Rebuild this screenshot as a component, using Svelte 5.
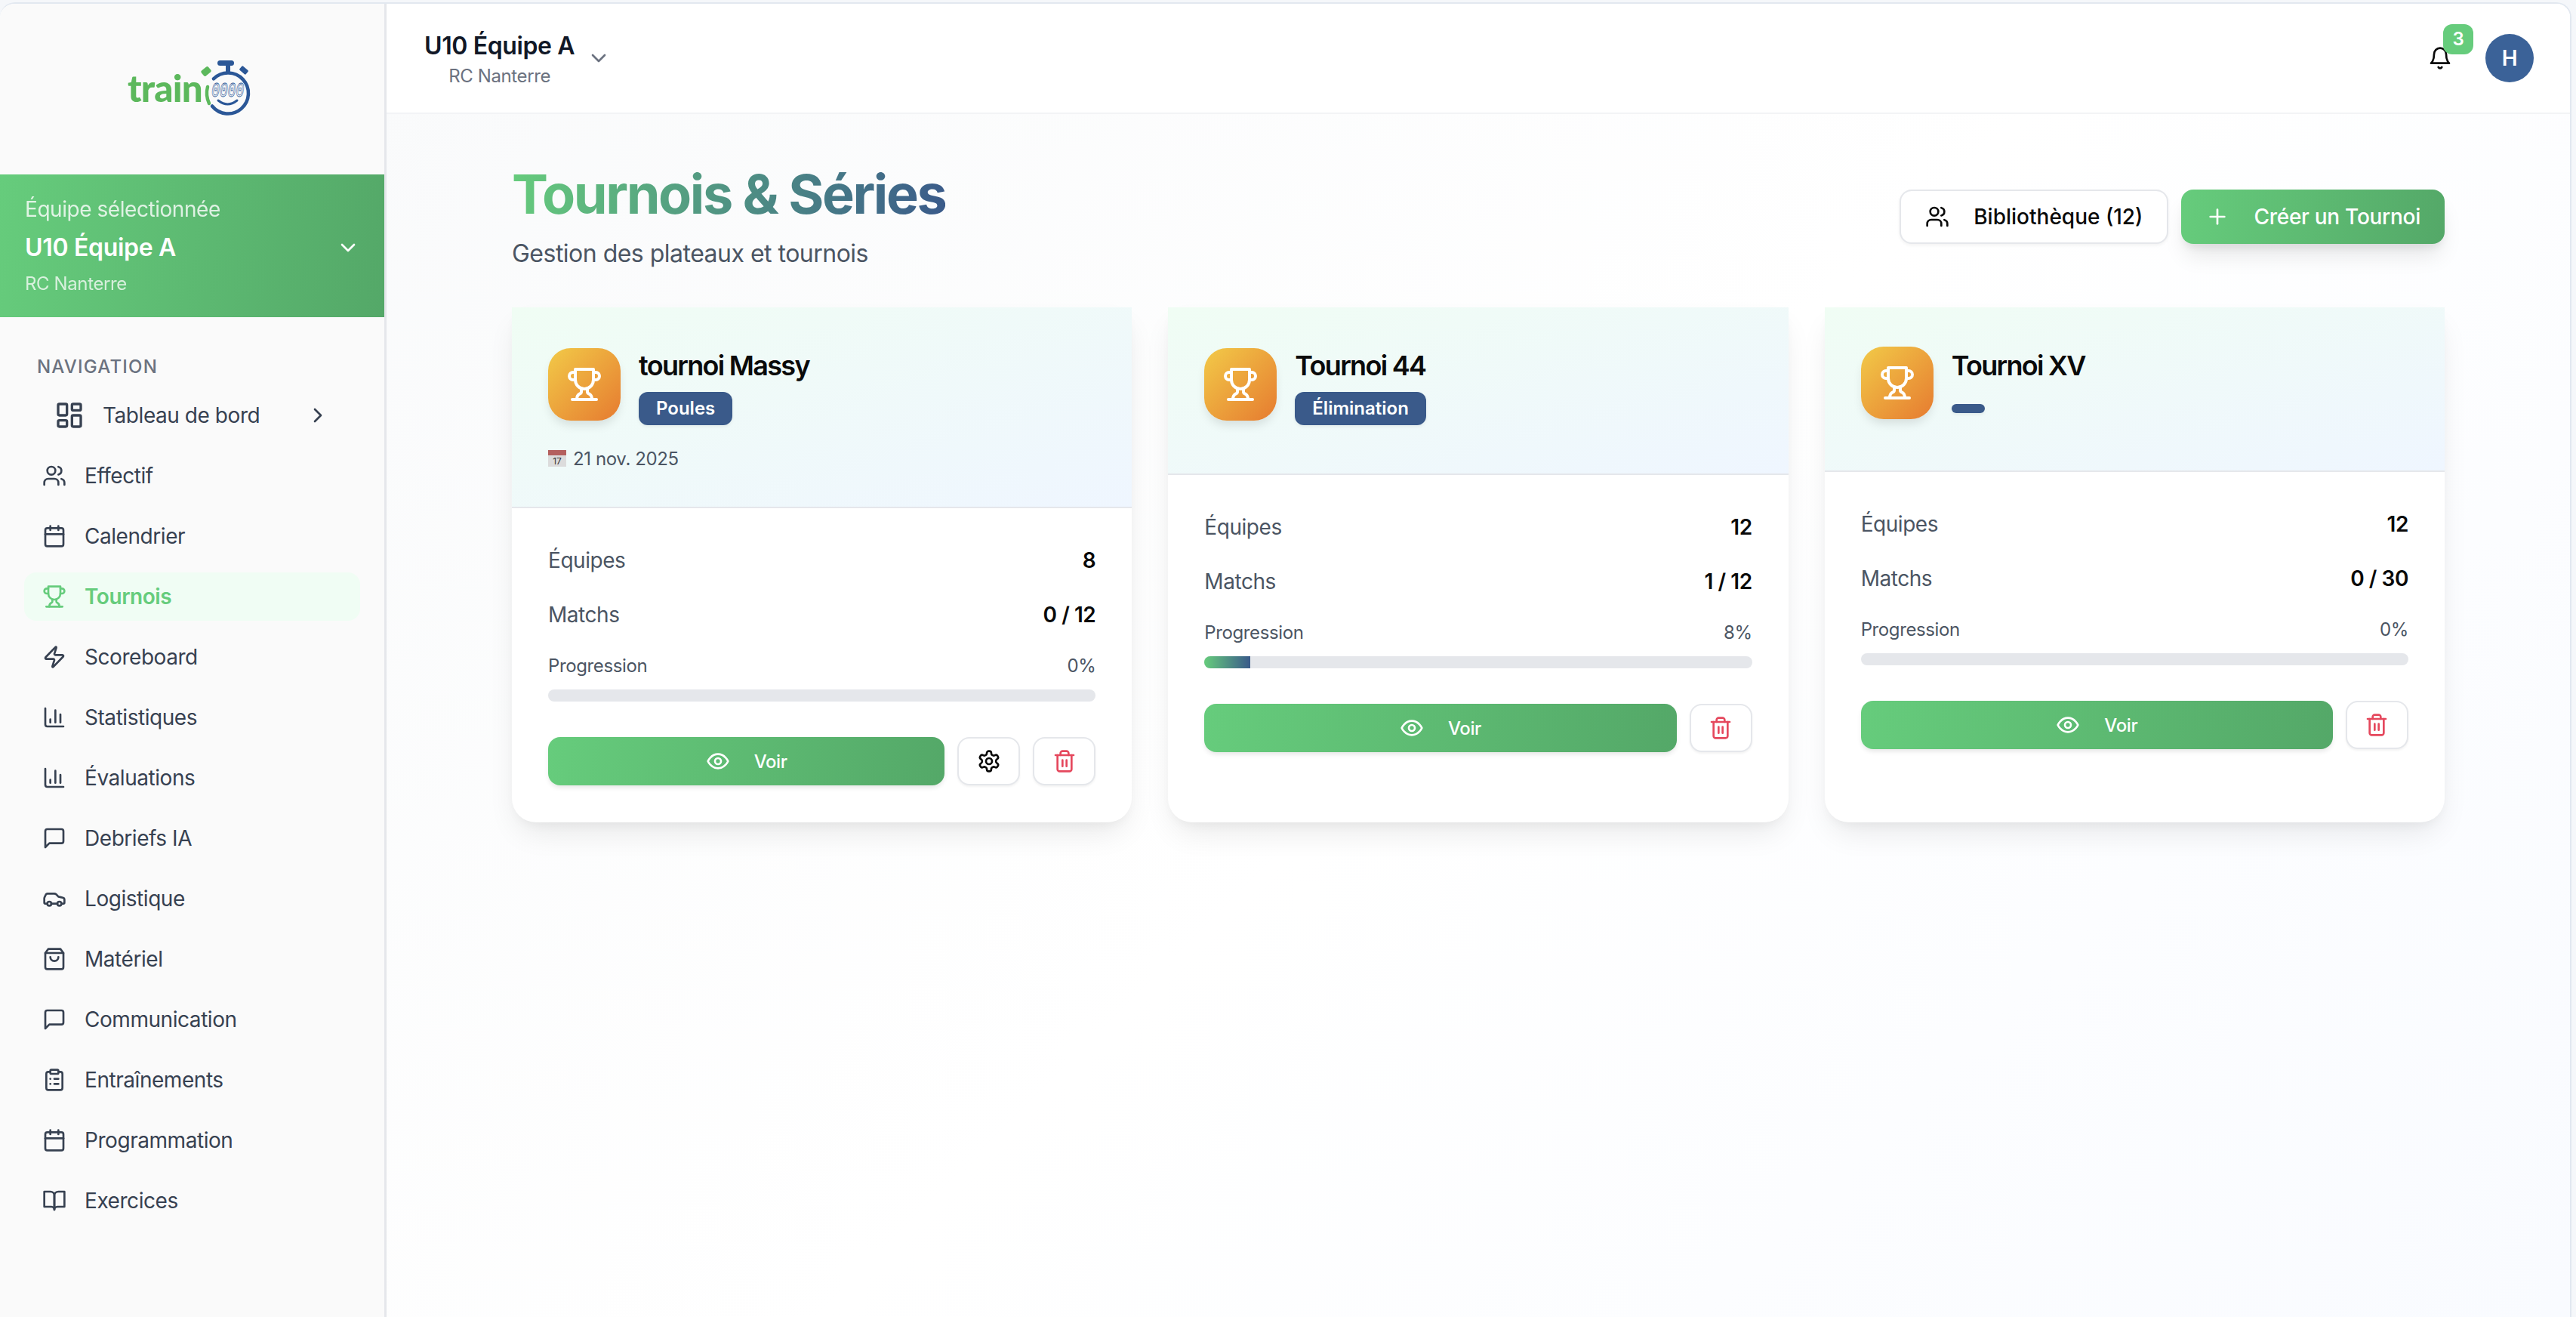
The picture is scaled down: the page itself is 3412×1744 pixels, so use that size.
<script lang="ts">
  // lucide shapes, drawn through a single snippet below
  const icons: Record<string, string> = {
    dashboard: '<rect width="7" height="9" x="3" y="3" rx="1"/><rect width="7" height="5" x="14" y="3" rx="1"/><rect width="7" height="9" x="14" y="12" rx="1"/><rect width="7" height="5" x="3" y="16" rx="1"/>',
    users: '<path d="M16 21v-2a4 4 0 0 0-4-4H6a4 4 0 0 0-4 4v2"/><circle cx="9" cy="7" r="4"/><path d="M22 21v-2a4 4 0 0 0-3-3.87"/><path d="M16 3.13a4 4 0 0 1 0 7.75"/>',
    calendar: '<path d="M8 2v4"/><path d="M16 2v4"/><rect width="18" height="18" x="3" y="4" rx="2"/><path d="M3 10h18"/>',
    trophy: '<path d="M6 9H4.5a2.5 2.5 0 0 1 0-5H6"/><path d="M18 9h1.5a2.5 2.5 0 0 0 0-5H18"/><path d="M4 22h16"/><path d="M10 14.66V17c0 .55-.47.98-.97 1.21C7.85 18.75 7 20.24 7 22"/><path d="M14 14.66V17c0 .55.47.98.97 1.21C16.15 18.75 17 20.24 17 22"/><path d="M18 2H6v7a6 6 0 0 0 12 0V2Z"/>',
    zap: '<path d="M4 14a1 1 0 0 1-.78-1.63l9.9-10.2a.5.5 0 0 1 .86.46l-1.92 6.02A1 1 0 0 0 13 10h7a1 1 0 0 1 .78 1.63l-9.9 10.2a.5.5 0 0 1-.86-.46l1.92-6.02A1 1 0 0 0 11 14z"/>',
    chart: '<path d="M3 3v16a2 2 0 0 0 2 2h16"/><path d="M18 17V9"/><path d="M13 17V5"/><path d="M8 17v-3"/>',
    message: '<path d="M21 15a2 2 0 0 1-2 2H7l-4 4V5a2 2 0 0 1 2-2h14a2 2 0 0 1 2 2z"/>',
    car: '<path d="M19 17h2c.6 0 1-.4 1-1v-3c0-.9-.7-1.7-1.5-1.9C18.7 10.6 16 10 16 10s-1.3-1.4-2.2-2.3c-.5-.4-1.1-.7-1.8-.7H5c-.6 0-1.1.4-1.4.9l-1.4 2.9A3.7 3.7 0 0 0 2 12v4c0 .6.4 1 1 1h2"/><circle cx="7" cy="17" r="2"/><path d="M9 17h6"/><circle cx="17" cy="17" r="2"/>',
    bag: '<path d="M6 2 3 6v14a2 2 0 0 0 2 2h14a2 2 0 0 0 2-2V6l-3-4Z"/><path d="M3 6h18"/><path d="M16 10a4 4 0 0 1-8 0"/>',
    clipboard: '<rect width="8" height="4" x="8" y="2" rx="1" ry="1"/><path d="M16 4h2a2 2 0 0 1 2 2v14a2 2 0 0 1-2 2H6a2 2 0 0 1-2-2V6a2 2 0 0 1 2-2h2"/><path d="M12 11h4"/><path d="M12 16h4"/><path d="M8 11h.01"/><path d="M8 16h.01"/>',
    book: '<path d="M2 3h6a4 4 0 0 1 4 4v14a3 3 0 0 0-3-3H2z"/><path d="M22 3h-6a4 4 0 0 0-4 4v14a3 3 0 0 1 3-3h7z"/>',
    eye: '<path d="M2 12s3-7 10-7 10 7 10 7-3 7-10 7-10-7-10-7Z"/><circle cx="12" cy="12" r="3"/>',
    settings: '<path d="M12.22 2h-.44a2 2 0 0 0-2 2v.18a2 2 0 0 1-1 1.73l-.43.25a2 2 0 0 1-2 0l-.15-.08a2 2 0 0 0-2.73.73l-.22.38a2 2 0 0 0 .73 2.73l.15.1a2 2 0 0 1 1 1.72v.51a2 2 0 0 1-1 1.74l-.15.09a2 2 0 0 0-.73 2.73l.22.38a2 2 0 0 0 2.73.73l.15-.08a2 2 0 0 1 2 0l.43.25a2 2 0 0 1 1 1.73V20a2 2 0 0 0 2 2h.44a2 2 0 0 0 2-2v-.18a2 2 0 0 1 1-1.73l.43-.25a2 2 0 0 1 2 0l.15.08a2 2 0 0 0 2.73-.73l.22-.39a2 2 0 0 0-.73-2.73l-.15-.08a2 2 0 0 1-1-1.74v-.5a2 2 0 0 1 1-1.74l.15-.09a2 2 0 0 0 .73-2.73l-.22-.38a2 2 0 0 0-2.73-.73l-.15.08a2 2 0 0 1-2 0l-.43-.25a2 2 0 0 1-1-1.73V4a2 2 0 0 0-2-2z"/><circle cx="12" cy="12" r="3"/>',
    trash: '<path d="M3 6h18"/><path d="M19 6v14c0 1-1 2-2 2H7c-1 0-2-1-2-2V6"/><path d="M8 6V4c0-1 1-2 2-2h4c1 0 2 1 2 2v2"/><line x1="10" x2="10" y1="11" y2="17"/><line x1="14" x2="14" y1="11" y2="17"/>',
    bell: '<path d="M6 8a6 6 0 0 1 12 0c0 7 3 9 3 9H3s3-2 3-9"/><path d="M10.3 21a1.94 1.94 0 0 0 3.4 0"/>',
    plus: '<path d="M5 12h14"/><path d="M12 5v14"/>',
    down: '<path d="m6 9 6 6 6-6"/>',
    right: '<path d="m9 18 6-6-6-6"/>'
  };

  const navItems = [
    { label: "Effectif", icon: "users" },
    { label: "Calendrier", icon: "calendar" },
    { label: "Tournois", icon: "trophy", active: true },
    { label: "Scoreboard", icon: "zap" },
    { label: "Statistiques", icon: "chart" },
    { label: "Évaluations", icon: "chart" },
    { label: "Debriefs IA", icon: "message" },
    { label: "Logistique", icon: "car" },
    { label: "Matériel", icon: "bag" },
    { label: "Communication", icon: "message" },
    { label: "Entraînements", icon: "clipboard" },
    { label: "Programmation", icon: "calendar" },
    { label: "Exercices", icon: "book" }
  ];

  const tournaments = [
    { name: "tournoi Massy", type: "Poules", date: "21 nov. 2025", teams: "8", matches: "0 / 12", pct: 0, label: "0%", settings: true },
    { name: "Tournoi 44", type: "Élimination", date: "", teams: "12", matches: "1 / 12", pct: 8.33, label: "8%", settings: false },
    { name: "Tournoi XV", type: "", date: "", teams: "12", matches: "0 / 30", pct: 0, label: "0%", settings: false }
  ];
</script>

{#snippet icon(name: string, size: number)}
  <svg class="icon" width={size} height={size} viewBox="0 0 24 24" fill="none" stroke="currentColor" stroke-width="2" stroke-linecap="round" stroke-linejoin="round">{@html icons[name]}</svg>
{/snippet}

<div class="window">
  <aside class="sidebar">
    <div class="logo">
      <svg width="190" height="80" viewBox="0 0 190 80">
        <text x="4" y="57" class="logo-word" textLength="99" lengthAdjust="spacingAndGlyphs">train</text>
        <path d="M110 37Q107 48 112 59" fill="none" stroke="#5cb85c" stroke-width="4.5" stroke-linecap="round" />
        <rect x="102" y="12" width="12" height="9" rx="2" fill="#5cb85c" transform="rotate(-40 108 16.5)" />
        <path d="M117.9 26.4A27 27 0 1 1 116 62.5" fill="none" stroke="#2b5797" stroke-width="4.5" stroke-linecap="round" />
        <rect x="123" y="2" width="22" height="7" rx="3.5" fill="#2b5797" />
        <rect x="134" y="8" width="6" height="11" fill="#2b5797" />
        <rect x="152.5" y="11.5" width="11" height="7" rx="1.5" fill="#2b5797" transform="rotate(40 158 15)" />
        <text x="115" y="50" class="logo-digits" textLength="43" lengthAdjust="spacingAndGlyphs">0000</text>
        <path d="M124 55Q136.5 65 149 55" fill="none" stroke="#2b5797" stroke-width="3" stroke-linecap="round" />
      </svg>
    </div>

    <div class="team">
      <div class="team-hint">Équipe sélectionnée</div>
      <div class="team-row">
        <span class="team-name">U10 Équipe A</span>
        {@render icon("down", 32)}
      </div>
      <div class="team-club">RC Nanterre</div>
    </div>

    <nav class="nav">
      <div class="nav-title">NAVIGATION</div>
      <div class="nav-item dash">
        {@render icon("dashboard", 40)}
        <span>Tableau de bord</span>
        <span class="nav-chevron">{@render icon("right", 32)}</span>
      </div>
      {#each navItems as item}
        <div class="nav-item" class:active={item.active}>
          {@render icon(item.icon, 32)}
          <span>{item.label}</span>
        </div>
      {/each}
    </nav>
  </aside>

  <div class="main">
    <header class="topbar">
      <div class="switcher">
        <div class="switcher-text">
          <div class="switcher-name">U10 Équipe A</div>
          <div class="switcher-club">RC Nanterre</div>
        </div>
        <span class="switcher-chevron">{@render icon("down", 32)}</span>
      </div>
      <div class="topbar-right">
        <div class="bell">
          {@render icon("bell", 32)}
          <span class="bell-badge">3</span>
        </div>
        <div class="avatar">H</div>
      </div>
    </header>

    <main class="content">
      <div class="page-head">
        <div>
          <h1>Tournois &amp; Séries</h1>
          <p>Gestion des plateaux et tournois</p>
        </div>
        <div class="page-actions">
          <button class="btn-outline">{@render icon("users", 32)}<span>Bibliothèque (12)</span></button>
          <button class="btn-primary">{@render icon("plus", 32)}<span>Créer un Tournoi</span></button>
        </div>
      </div>

      <div class="grid">
        {#each tournaments as t}
          <article class="card">
            <div class="card-head">
              <div class="card-row">
                <div class="card-icon">{@render icon("trophy", 48)}</div>
                <div class="card-info" class:untyped={!t.type}>
                  <h3>{t.name}</h3>
                  <span class="badge">{t.type}</span>
                </div>
              </div>
              {#if t.date}
                <div class="card-date">
                  <svg width="24" height="22" viewBox="0 0 24 22">
                    <rect width="24" height="22" fill="#dcdcdc" />
                    <rect width="24" height="7" fill="#b4605e" />
                    <text x="12" y="19" text-anchor="middle" class="date-num">17</text>
                  </svg>
                  <span>{t.date}</span>
                </div>
              {/if}
            </div>
            <div class="card-body">
              <div class="stat"><span>Équipes</span><strong>{t.teams}</strong></div>
              <div class="stat"><span>Matchs</span><strong>{t.matches}</strong></div>
              <div class="progress-label"><span>Progression</span><span>{t.label}</span></div>
              <div class="track"><div class="fill" style="width: {t.pct}%"></div></div>
              <div class="card-actions">
                <button class="btn-view">{@render icon("eye", 32)}<span>Voir</span></button>
                {#if t.settings}
                  <button class="btn-icon">{@render icon("settings", 32)}</button>
                {/if}
                <button class="btn-icon danger">{@render icon("trash", 32)}</button>
              </div>
            </div>
          </article>
        {/each}
      </div>
    </main>
  </div>
</div>

<style>
  :global(body) {
    margin: 0;
    background: #f5f7fa;
    font-family: Inter, "Noto Sans", sans-serif;
    overflow: hidden;
  }

  /* the reference's Inter runs a little tighter than the installed one */
  :global(*) {
    letter-spacing: -0.016em;
  }

  .window {
    display: flex;
    width: 3406px;
    height: 1741px;
    margin-top: 3px;
    box-sizing: border-box;
    border-top: 2px solid #e2e8f0;
    border-right: 2px solid #e2e8f0;
    border-radius: 20px 20px 0 0;
    overflow: hidden;
    background: #fff;
  }

  .icon {
    display: block;
    flex: none;
  }

  /* sidebar */
  .sidebar {
    width: 512px;
    flex: none;
    box-sizing: border-box;
    border-right: 3px solid #e5e7eb;
    background: #fafafa;
  }

  .logo {
    height: 226px;
    box-sizing: border-box;
    padding: 0 0 0 10px;
    display: flex;
    align-items: center;
    justify-content: center;
  }

  .logo-word {
    font-family: Lato, sans-serif;
    font-weight: 900;
    font-size: 50px;
    fill: #5cb85c;
  }

  .logo-digits {
    font-family: "Liberation Mono", monospace;
    font-style: italic;
    font-size: 28px;
    fill: none;
    stroke: #2b5797;
    stroke-width: 0.8;
  }

  .team {
    height: 189px;
    box-sizing: border-box;
    padding: 26px 32px 0 33px;
    background: linear-gradient(97deg, #66cc7c, #54a868);
    color: #fff;
  }

  .team-hint {
    font-size: 28px;
    line-height: 40px;
    opacity: 0.8;
  }

  .team-row {
    display: flex;
    align-items: center;
    justify-content: space-between;
    height: 48px;
    margin-top: 7px;
  }

  .team-name {
    font-size: 32px;
    font-weight: 600;
    line-height: 48px;
    letter-spacing: -0.01em;
  }

  .team-club {
    font-size: 24px;
    line-height: 32px;
    margin-top: 8px;
    opacity: 0.75;
  }

  .nav {
    padding: 0 32px;
  }

  .nav-title {
    height: 98px;
    box-sizing: border-box;
    padding: 50px 0 0 17px;
    font-size: 24px;
    line-height: 32px;
    font-weight: 500;
    letter-spacing: 1.2px;
    color: #6b7280;
  }

  .nav-item {
    display: flex;
    align-items: center;
    gap: 24px;
    height: 64px;
    margin-bottom: 16px;
    padding: 0 24px;
    border-radius: 16px;
    font-size: 28px;
    color: #374151;
  }

  .nav-item.dash {
    padding: 0 40px;
  }

  .nav-chevron {
    margin-left: auto;
  }

  .nav-item.active {
    background: #f0fdf4;
    color: #66cc7c;
    font-weight: 600;
  }

  /* top bar */
  .main {
    flex: 1;
    min-width: 0;
    display: flex;
    flex-direction: column;
    background: linear-gradient(135deg, #f9fafb 0%, #ffffff 50%, #f9fbff 100%);
  }

  .topbar {
    flex: none;
    height: 146px;
    box-sizing: border-box;
    padding: 0 48px 0 50px;
    display: flex;
    align-items: center;
    justify-content: space-between;
    background: #fff;
    border-bottom: 2px solid #f3f4f6;
  }

  .switcher {
    display: flex;
    align-items: center;
    gap: 16px;
  }

  .switcher-text {
    text-align: center;
  }

  .switcher-name {
    font-size: 32px;
    font-weight: 600;
    line-height: 48px;
    letter-spacing: -0.012em;
    color: #111827;
  }

  .switcher-club {
    font-size: 24px;
    line-height: 32px;
    color: #6b7280;
  }

  .switcher-chevron {
    color: #6b7280;
  }

  .topbar-right {
    display: flex;
    align-items: center;
    gap: 44px;
  }

  .bell {
    position: relative;
    color: #0a0a0a;
  }

  .bell-badge {
    position: absolute;
    left: 20px;
    top: -29px;
    width: 40px;
    height: 40px;
    border-radius: 12px;
    background: #66cc7c;
    color: #fff;
    font-size: 24px;
    font-weight: 600;
    line-height: 40px;
    text-align: center;
  }

  .avatar {
    width: 64px;
    height: 64px;
    border-radius: 50%;
    background: #3b6298;
    color: #fff;
    font-size: 28px;
    font-weight: 600;
    line-height: 64px;
    text-align: center;
  }

  /* page */
  .content {
    width: 2560px;
    margin: 0 auto;
    padding-top: 66px;
  }

  .page-head {
    display: flex;
    align-items: center;
    justify-content: space-between;
    margin-bottom: 47px;
  }

  h1 {
    margin: 0;
    font-size: 72px;
    font-weight: 700;
    line-height: 80px;
    letter-spacing: -2.4px;
    background: linear-gradient(100deg, #66cc7c, #3a5a8a);
    -webkit-background-clip: text;
    background-clip: text;
    color: transparent;
    width: fit-content;
  }

  .page-head p {
    margin: 15px 0 0;
    font-size: 32px;
    line-height: 48px;
    color: #4b5563;
  }

  .page-actions {
    display: flex;
    gap: 17px;
    margin-bottom: 3px;
  }

  button {
    font-family: inherit;
    cursor: pointer;
  }

  .btn-outline,
  .btn-primary {
    display: flex;
    align-items: center;
    gap: 32px;
    height: 72px;
    box-sizing: border-box;
    padding: 0 32px;
    border-radius: 16px;
    font-size: 28px;
    font-weight: 500;
  }

  .btn-outline span {
    letter-spacing: 0;
  }

  .btn-primary span {
    letter-spacing: -0.01em;
  }

  .btn-outline {
    background: #fff;
    border: 2px solid #e5e7eb;
    color: #0a0a0a;
    box-shadow: 0 2px 4px rgba(0, 0, 0, 0.05);
  }

  .btn-primary {
    border: none;
    background: linear-gradient(97deg, #66cc7c, #54a868);
    color: #fff;
    box-shadow: 0 20px 30px -6px rgba(0, 0, 0, 0.1), 0 8px 12px -4px rgba(0, 0, 0, 0.08);
  }

  .grid {
    display: grid;
    grid-template-columns: repeat(3, 1fr);
    gap: 48px;
  }

  .card {
    display: flex;
    flex-direction: column;
    border-radius: 0 0 32px 32px;
    background: #fff;
    box-shadow: 0 20px 40px -8px rgba(0, 0, 0, 0.09), 0 8px 16px -6px rgba(0, 0, 0, 0.05);
  }

  .card-head {
    padding: 50px 48px 48px;
    border-bottom: 2px solid #e5e7eb;
    background: linear-gradient(to bottom right, #f0fdf4, #eff6ff);
  }

  .card-row {
    display: flex;
    align-items: center;
    gap: 24px;
    margin-bottom: 18px;
  }

  .card-icon {
    width: 96px;
    height: 96px;
    flex: none;
    display: flex;
    align-items: center;
    justify-content: center;
    border-radius: 30px;
    color: #fff;
    background: linear-gradient(135deg, #f2ca48, #e67b30);
    box-shadow: 0 8px 14px -3px rgba(0, 0, 0, 0.12);
  }

  .card-info {
    height: 104px;
    display: flex;
    flex-direction: column;
    align-items: flex-start;
  }

  .card-info.untyped {
    height: 100px;
  }

  h3 {
    margin: 0;
    font-size: 36px;
    font-weight: 600;
    line-height: 54px;
    letter-spacing: -1.7px;
    color: #0a0a0a;
  }

  .badge {
    flex: none;
    margin-top: 8px;
    height: 44px;
    min-width: 44px;
    box-sizing: border-box;
    padding: 6px 23px;
    border-radius: 12px;
    background: #3a5a8a;
    color: #fff;
    font-size: 24px;
    font-weight: 600;
    line-height: 32px;
    letter-spacing: 0;
    box-shadow: 0 2px 4px rgba(0, 0, 0, 0.06);
  }

  .untyped .badge {
    margin-top: 24px;
    height: 12px;
    padding: 0;
  }

  .card-date {
    display: flex;
    align-items: center;
    gap: 9px;
    margin-top: 30px;
    height: 32px;
    font-size: 24px;
    letter-spacing: 0;
    color: #4b5563;
  }

  .date-num {
    font-family: Inter, sans-serif;
    font-size: 12px;
    fill: #333;
  }

  .card-body {
    padding: 49px 48px;
  }

  .stat {
    display: flex;
    align-items: center;
    justify-content: space-between;
    height: 40px;
    margin-bottom: 32px;
    font-size: 28px;
    color: #4b5563;
  }

  .stat strong {
    font-weight: 600;
    color: #0a0a0a;
  }

  .progress-label {
    display: flex;
    justify-content: space-between;
    font-size: 24px;
    line-height: 32px;
    color: #4b5563;
  }

  .track {
    height: 16px;
    margin-top: 15px;
    border-radius: 8px;
    background: #e5e7eb;
    overflow: hidden;
  }

  .fill {
    height: 100%;
    background: linear-gradient(90deg, #66cc7c, #3a5a8a);
  }

  .card-actions {
    display: flex;
    gap: 17px;
    margin-top: 47px;
  }

  .btn-view {
    flex: 1;
    height: 64px;
    display: flex;
    align-items: center;
    justify-content: center;
    gap: 32px;
    border: none;
    border-radius: 16px;
    background: linear-gradient(97deg, #66cc7c, #54a868);
    color: #fff;
    font-size: 24px;
    font-weight: 500;
    box-shadow: 0 4px 6px -1px rgba(0, 0, 0, 0.1);
  }

  .btn-icon {
    width: 83px;
    height: 64px;
    box-sizing: border-box;
    display: flex;
    align-items: center;
    justify-content: center;
    padding: 0;
    border: 2px solid #e5e7eb;
    border-radius: 16px;
    background: #fff;
    color: #0a0a0a;
    box-shadow: 0 2px 3px rgba(0, 0, 0, 0.05);
  }

  .btn-icon.danger {
    color: #e5485d;
  }
</style>
